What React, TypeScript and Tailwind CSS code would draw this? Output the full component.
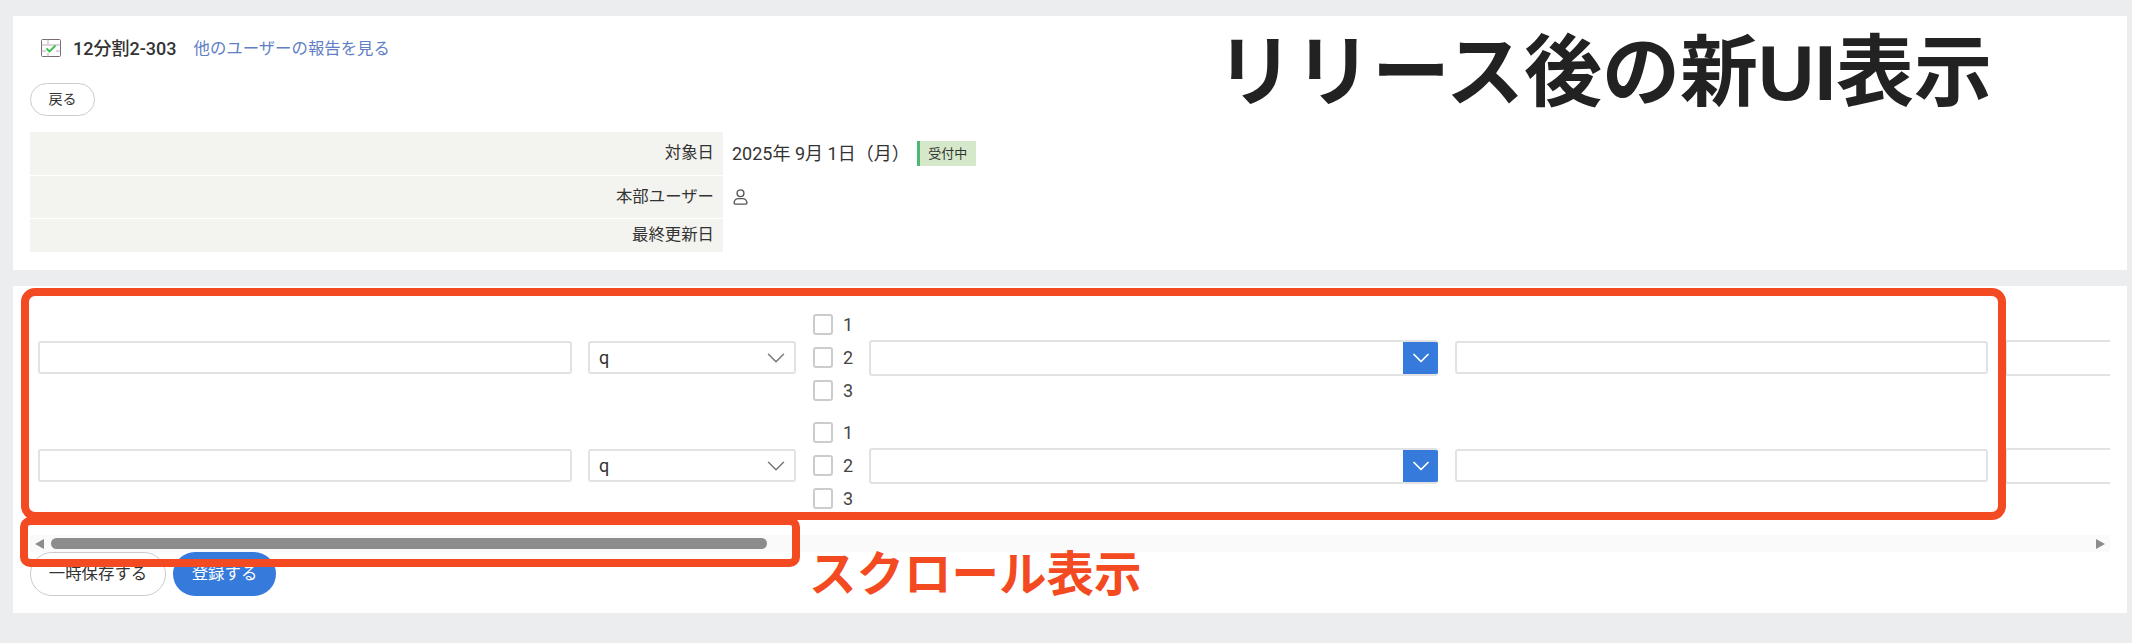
import { ChevronDown } from "lucide-react";

const sans = { fontFamily: 'Roboto, "Noto Sans CJK JP", sans-serif' };

function Row({ top }: { top: string }) {
  return (
    <div className={`flex items-center ${top}`}>
      <input className="h-[33px] w-[534px] shrink-0 rounded-[3px] border-2 border-[#e2e2e2] bg-white" />
      <div className="ml-[16px] flex h-[33px] w-[208px] shrink-0 items-center justify-between rounded-[3px] border-2 border-[#e2e2e2] pl-[9px] pr-[3px] text-[18px] text-[#333]">
        <span>q</span>
        <ChevronDown size={30} strokeWidth={1.2} className="text-[#777]" />
      </div>
      <div className="ml-[17px] flex w-[56px] shrink-0 flex-col gap-[12px]">
        {["1", "2", "3"].map((n) => (
          <label key={n} className="flex h-[21px] items-center gap-[10px] text-[18px] text-[#444]">
            <span className="h-[21px] w-[20px] rounded-[3px] border-2 border-[#ccc] bg-white" />
            {n}
          </label>
        ))}
      </div>
      <div className="flex h-[36px] w-[569px] shrink-0 overflow-hidden rounded-[3px] border-2 border-r-0 border-[#e2e2e2]">
        <div className="flex-1" />
        <div className="-my-[2px] flex w-[35px] items-center justify-center rounded-r-[3px] bg-[#367bdb] text-white">
          <ChevronDown size={28} strokeWidth={1.5} />
        </div>
      </div>
      <input className="ml-[17px] h-[33px] w-[533px] shrink-0 rounded-[3px] border-2 border-[#e2e2e2] bg-white" />
      <div className="ml-[17px] h-[36px] w-[300px] shrink-0 rounded-[3px] border-2 border-[#e2e2e2] bg-white" />
    </div>
  );
}

export default function App() {
  return (
    <div className="relative h-[643px] w-[2132px] overflow-hidden bg-[#ecedef] pt-[16px] pl-[13px] pr-[5px]" style={sans}>
      <section className="h-[254px] bg-white pl-[17px] pt-[20px]">
        <div className="flex h-[24px] items-center pl-[11px]">
          <svg width="20" height="18" viewBox="0 0 20 18" fill="none">
            <rect x="0.5" y="0.5" width="19" height="17" rx="1" stroke="#7a6a78" />
            <path d="M0.5 6H19.5M0.5 12H5M15 12H19.5M7 0.5V5M7 14V17.5" stroke="#b9a9b5" />
            <path d="M5.5 9.5L8.5 12.5L14.5 6.5" stroke="#35c24a" strokeWidth="1.8" />
          </svg>
          <h1 className="ml-[12px] text-[18px] font-medium text-[#333]">12分割2-303</h1>
          <a className="ml-[17px] mt-[3px] text-[16.4px] text-[#5f80c4]">他のユーザーの報告を見る</a>
        </div>
        <button className="mt-[23px] block h-[33px] w-[65px] rounded-full border border-[#ccc] text-[14px] text-[#333]">戻る</button>
        <div className="mt-[16px] text-[16.4px] text-[#333]">
          <div className="flex h-[43px] items-center">
            <div className="flex h-full w-[693px] items-center justify-end bg-[#f3f3ef] pr-[9px]">対象日</div>
            <span className="ml-[9px] text-[18px]">2025年 9月 1日（月）</span>
            <span className="ml-[7px] flex h-[25px] w-[59px] items-center justify-center border-l-[3px] border-[#4fb870] bg-[#d5e8c9] text-[13px]">受付中</span>
          </div>
          <div className="mt-px flex h-[42px] items-center">
            <div className="flex h-full w-[693px] items-center justify-end bg-[#f3f3ef] pr-[9px]">本部ユーザー</div>
            <svg className="ml-[10px]" width="15" height="16" viewBox="0 0 14 15" fill="none" stroke="#555" strokeWidth="1.3">
              <circle cx="7" cy="4" r="3.2" />
              <path d="M1 13.2C1 10.5 3 9 5 9H9C11 9 13 10.5 13 13.2C13 13.8 12.7 14.2 12 14.2H2C1.3 14.2 1 13.8 1 13.2Z" />
            </svg>
          </div>
          <div className="mt-px flex h-[33px] items-center">
            <div className="flex h-full w-[693px] items-center justify-end bg-[#f3f3ef] pr-[9px]">最終更新日</div>
          </div>
        </div>
      </section>

      <section className="mt-[16px] h-[327px] bg-white pl-[17px] pt-[28px]">
        <div className="w-[2080px] overflow-hidden pl-[8px]">
          <Row top="" />
          <Row top="mt-[21px]" />
        </div>
        <div className="mt-[26px] flex h-[17px] w-[2080px] items-center bg-[#fafafa] px-[5px]">
          <span className="border-y-[5px] border-r-[9px] border-y-transparent border-r-[#8c8c8c]" />
          <div className="ml-[7px] h-[11px] w-[716px] rounded-full bg-[#8c8c8c]" />
          <span className="ml-auto border-y-[5px] border-l-[9px] border-y-transparent border-l-[#8c8c8c]" />
        </div>
        <div className="flex gap-[7px]">
          <button className="h-[44px] w-[136px] rounded-full border border-[#ccc] text-[16.4px] text-[#333]">一時保存する</button>
          <button className="h-[44px] w-[103px] rounded-full bg-[#367bdb] text-[16.4px] text-white">登録する</button>
        </div>
      </section>

      {/* annotations on top of the screenshot */}
      <div className="absolute left-[1216px] top-[18px] text-[78px] font-bold leading-[110px] text-[#222]" style={{ fontFamily: '"Liberation Sans", "Noto Sans CJK JP", sans-serif' }}>リリース後の新UI表示</div>
      <div className="absolute left-[21px] top-[288px] h-[232px] w-[1985px] rounded-[14px] border-[8px] border-[#f44a22]" />
      <div className="absolute left-[20px] top-[517px] h-[50px] w-[780px] rounded-[10px] border-[8px] border-[#f44a22]" />
      <div className="absolute left-[809px] top-[539px] text-[47.5px] font-bold leading-[64px] text-[#f44a22]" style={{ fontFamily: '"Noto Sans CJK JP", sans-serif' }}>スクロール表示</div>
    </div>
  );
}
